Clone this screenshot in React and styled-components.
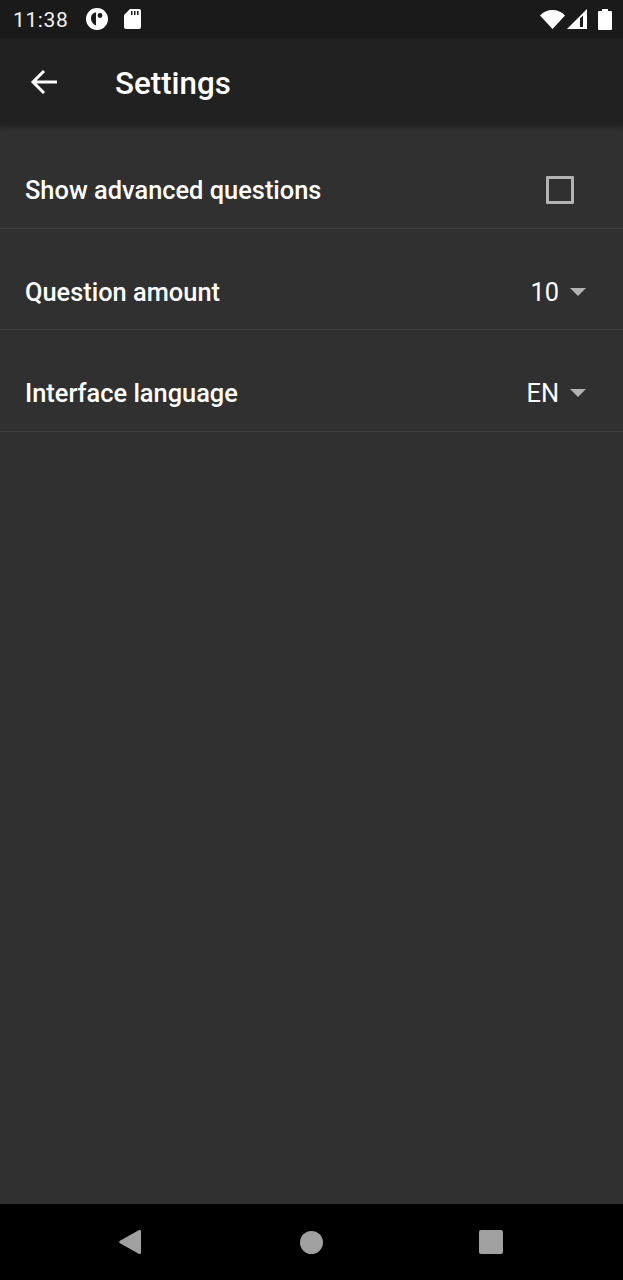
import React from "react";
import styled, { createGlobalStyle } from "styled-components";

const Global = createGlobalStyle`
  html, body { margin: 0; padding: 0; background: #303030; }
  body { font-family: Roboto, "Noto Sans", sans-serif; }
`;

const Screen = styled.div`
  width: 623px;
  height: 1280px;
  display: flex;
  flex-direction: column;
  background: #303030;
  overflow: hidden;
`;

const StatusBar = styled.div`
  height: 38px;
  flex: none;
  background: #1a1a1a;
  color: #fff;
  display: flex;
  align-items: center;
  padding: 0 11px 0 13px;
`;

const Clock = styled.span`
  font-size: 21px;
  letter-spacing: 0.6px;
  color: #f2f2f2;
  margin-right: 17px;
  padding-top: 2px;
`;

const StatusIcon = styled.svg`
  display: block;
  fill: #fff;
  flex: none;
  margin-right: ${(p) => p.$gap || 0}px;
`;

const Spacer = styled.div`
  flex: 1;
`;

const Toolbar = styled.header`
  height: 88px;
  flex: none;
  background: #212121;
  display: flex;
  align-items: center;
  padding-left: 30px;
  box-shadow: 0 2px 5px rgba(0, 0, 0, 0.22);
  position: relative;
`;

const Title = styled.h1`
  margin: 2px 0 0 57px;
  font-size: 31.3px;
  font-weight: 500;
  color: #fff;
`;

const List = styled.main`
  flex: 1;
  display: flex;
  flex-direction: column;
  padding-top: 2px;
`;

const Row = styled.div`
  height: 100.5px;
  flex: none;
  box-sizing: border-box;
  border-bottom: 1px solid #3f3f3f;
  display: flex;
  align-items: center;
  justify-content: space-between;
  padding: 25px 37px 0 25px;
  margin-bottom: 1px;
`;

const Label = styled.span`
  font-size: 25.4px;
  font-weight: 500;
  color: #fff;
`;

const Checkbox = styled.span`
  box-sizing: border-box;
  display: block;
  width: 28px;
  height: 28px;
  margin-right: 12px;
  border: 3px solid #b3b3b3;
  border-radius: 1px;
`;

const Select = styled.div`
  display: flex;
  align-items: center;
  gap: 11px;
`;

const Value = styled.span`
  font-size: 25.4px;
  color: #fff;
`;

const Caret = styled.span`
  width: 0;
  height: 0;
  border-left: 8px solid transparent;
  border-right: 8px solid transparent;
  border-top: 8px solid #b3b3b3;
`;

const NavBar = styled.nav`
  height: 76px;
  flex: none;
  background: #000;
  display: flex;
  align-items: center;
  padding-left: 119px;
`;

const NavIcon = styled.svg`
  display: block;
  flex: none;
  fill: #a0a0a0;
  margin-right: ${(p) => p.$gap || 0}px;
`;

const settings = [
  { label: "Question amount", value: "10" },
  { label: "Interface language", value: "EN" },
];

export default function App() {
  return (
    <Screen>
      <Global />
      <StatusBar>
        <Clock>11:38</Clock>
        <StatusIcon width="24" height="24" viewBox="0 0 24 24" $gap={15}>
          <path fillRule="evenodd" d="M12 1a11 11 0 1 1 0 22 11 11 0 0 1 0-22zM11 5.500C8 5.500 6 8 6 11.500c0 3 2 6 5 7zM15 6.100a2.400 2.400 0 1 0 0 4.800 2.400 2.400 0 0 0 0-4.800z" />
        </StatusIcon>
        <StatusIcon width="17" height="20" viewBox="0 0 17 20">
          <path fillRule="evenodd" d="M6 0h9a2 2 0 0 1 2 2v16a2 2 0 0 1-2 2H2a2 2 0 0 1-2-2V6zM7 2v4h1.500V2zM10 2v4h1.500V2zM13 2v4h1.500V2z" />
        </StatusIcon>
        <Spacer />
        <StatusIcon width="25" height="19" viewBox="0 0 25 19" $gap={2}>
          <path d="M12.500 19 0 5.500Q5 0 12.500 0T25 5.500z" />
        </StatusIcon>
        <StatusIcon width="20" height="20" viewBox="0 0 20 20" $gap={11}>
          <path fillRule="evenodd" d="M0 20 20 0v20zM13 9.500V18h3V6.500z" />
        </StatusIcon>
        <StatusIcon width="14" height="21" viewBox="0 0 14 21">
          <path d="M4 2V0h6v2h3a1 1 0 0 1 1 1v17a1 1 0 0 1-1 1H1a1 1 0 0 1-1-1V3a1 1 0 0 1 1-1z" />
        </StatusIcon>
      </StatusBar>
      <Toolbar>
        <svg width="28" height="28" viewBox="0 0 28 28" fill="none" stroke="#fff" strokeWidth="3" style={{ display: "block" }}>
          <path d="M27 14H3M14 3 3 14l11 11" />
        </svg>
        <Title>Settings</Title>
      </Toolbar>
      <List>
        <Row>
          <Label>Show advanced questions</Label>
          <Checkbox />
        </Row>
        {settings.map((s) => (
          <Row key={s.label}>
            <Label>{s.label}</Label>
            <Select>
              <Value>{s.value}</Value>
              <Caret />
            </Select>
          </Row>
        ))}
      </List>
      <NavBar>
        <NavIcon width="23" height="26" viewBox="0 0 24 26" $gap={158}>
          <path d="M21 0.500a1.500 1.500 0 0 1 2 1.500v22a1.500 1.500 0 0 1-2 1.500L1 14.300a1.500 1.500 0 0 1 0-2.600z" />
        </NavIcon>
        <NavIcon width="23" height="23" viewBox="0 0 24 24" $gap={156}>
          <circle cx="12" cy="12" r="12" />
        </NavIcon>
        <NavIcon width="24" height="24" viewBox="0 0 24 24">
          <rect width="24" height="24" rx="2" />
        </NavIcon>
      </NavBar>
    </Screen>
  );
}
